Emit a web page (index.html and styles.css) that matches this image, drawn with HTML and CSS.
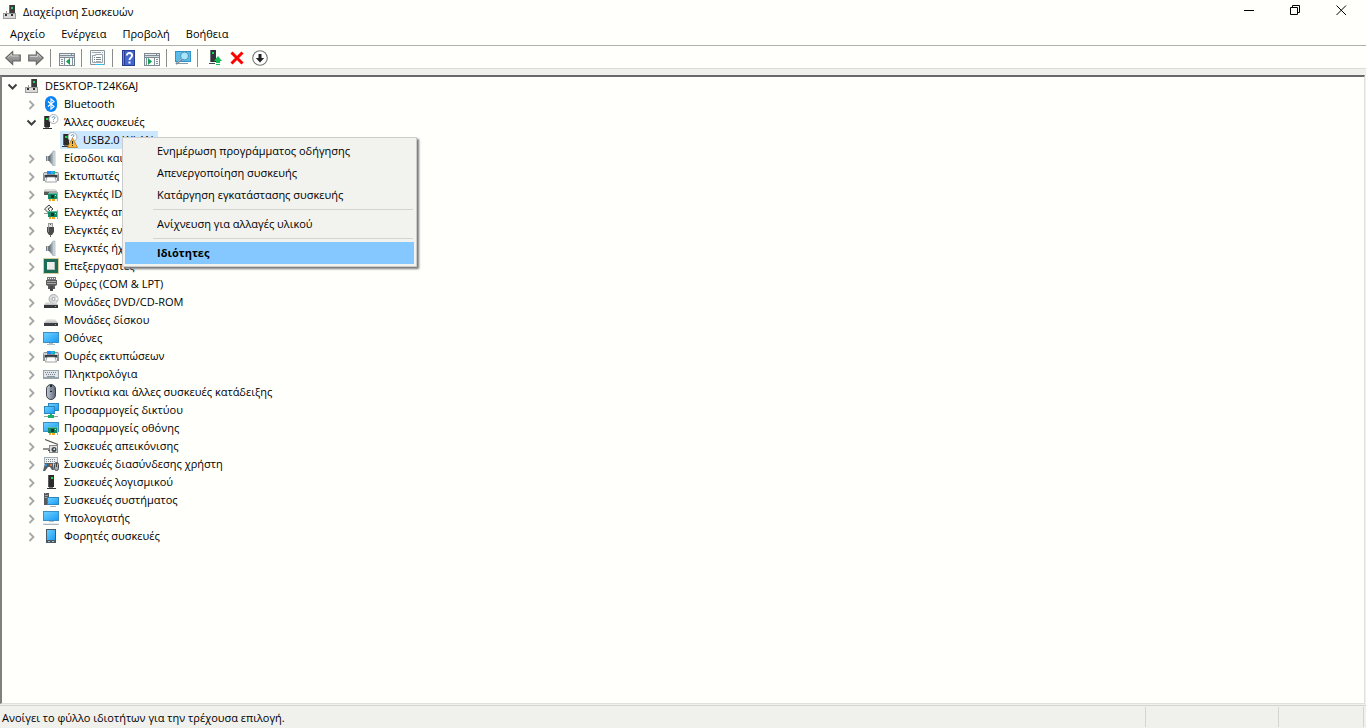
FILE: index.html
```
<!DOCTYPE html>
<html lang="el">
<head>
  <meta charset="UTF-8" />
  <meta name="viewport" content="width=device-width, initial-scale=1" />
  <title>Διαχείριση Συσκευών</title>
  <link rel="stylesheet" href="styles.css">
</head>
<body>
  <svg class="sprite" aria-hidden="true">
    <defs>
      <linearGradient id="gScreen" x1="0" y1="0" x2="1" y2="1">
        <stop offset="0" stop-color="#6dd0ff" />
        <stop offset="1" stop-color="#1a9cf5" />
      </linearGradient>
      <linearGradient id="gGrey" x1="0" y1="0" x2="0" y2="1">
        <stop offset="0" stop-color="#b4b4b4" />
        <stop offset="1" stop-color="#7c7c7c" />
      </linearGradient>
      <linearGradient id="gCone" x1="0" y1="0" x2="1" y2="0">
        <stop offset="0" stop-color="#59646c" />
        <stop offset="1" stop-color="#b8c3ca" />
      </linearGradient>
      <linearGradient id="gDrive" x1="0" y1="0" x2="0" y2="1">
        <stop offset="0" stop-color="#f0f0f0" />
        <stop offset="1" stop-color="#b9b9b9" />
      </linearGradient>
      <linearGradient id="gMouse" x1="0" y1="0" x2="1" y2="0">
        <stop offset="0" stop-color="#c3ccd8" />
        <stop offset="1" stop-color="#5d6775" />
      </linearGradient>
    </defs>
    <symbol id="closed" viewBox="0 0 16 16"><path d="M6.500 5l4 4-4 4" fill="none" stroke="#a6a6a6" stroke-width="1.800" /></symbol>
    <symbol id="open" viewBox="0 0 16 16"><path d="M4.500 6.500l4 4 4-4" fill="none" stroke="#404040" stroke-width="2" /></symbol>

    <symbol id="pc" viewBox="0 0 16 16">
      <path d="M7 1h6v8H7z" fill="#3b3b3b" /><path d="M7 1h1v8H7z" fill="#6d6d6d" />
      <path d="M9 3h2v2H9z" fill="#20d060" />
      <path d="M1 9h3V7h1v2h9v6H1z" fill="#9b9b9b" /><path d="M2 10h11v4H2z" fill="#dadada" />
      <path d="M3 10h2v2H3zM9 10h2v2H9z" fill="#303030" />
    </symbol>
    <symbol id="bluetooth" viewBox="0 0 16 16">
      <rect x="2" y="0" width="12" height="16" rx="6" fill="#0a84f5" />
      <path d="M5 5.500l6 5-3 2.500V3l3 2.500-6 5" fill="none" stroke="#fff" stroke-width="1.100" />
    </symbol>
    <symbol id="tower" viewBox="0 0 16 16">
      <path d="M1 2h6v11H1z" fill="#2c2c2c" /><path d="M1 2h1v11H1z" fill="#5b5b5b" />
      <path d="M3 4h2v2H3z" fill="#13e04b" /><path d="M0 14h9v1H0z" fill="#333" /><path d="M2 13h4v1H2z" fill="#777" />
    </symbol>
    <symbol id="unknown" viewBox="0 0 16 16">
      <use href="#tower" />
      <circle cx="10.500" cy="5" r="4.500" fill="#fff" stroke="#a9adb1" />
      <path d="M9.200 4c0-1.800 2.800-1.800 2.800-.300 0 1-1.500 1-1.500 2M10 7.300h1" fill="none" stroke="#4a8fc4" stroke-width="1" />
    </symbol>
    <symbol id="warning" viewBox="0 0 16 16">
      <use href="#unknown" />
      <path d="M10.500 6L15.500 15.500H5.500z" fill="#fbb836" stroke="#b97a16" stroke-width=".8" />
      <path d="M10 9h1v3h-1zM10 13h1v1h-1z" fill="#222" />
    </symbol>
    <symbol id="speaker" viewBox="0 0 16 16">
      <path d="M3 6h3v5H3z" fill="#707b83" /><path d="M6 6l4-5v15l-4-5z" fill="url(#gCone)" />
      <path d="M10 1h2v15h-2z" fill="#dce2e5" stroke="#9aa4ab" stroke-width=".6" /><path d="M4 6h1v5H4z" fill="#b9c2c8" />
    </symbol>
    <symbol id="printer" viewBox="0 0 16 16">
      <path d="M4 3h8v3H4z" fill="#1f8bef" /><path d="M8 3h2v3H8z" fill="#22b6f5" /><path d="M10 3h2v3h-2z" fill="#15b993" />
      <path d="M1 4h3v2h8V4h3l1 2v7h-2v-3H2v3H0V6z" fill="#8a9298" />
      <path d="M1 5h3v2H1zM12 5h3v2h-3z" fill="#cdd2d5" /><path d="M2 7h12v2H2z" fill="#33393e" />
      <path d="M4 9h8l1.500 5h-11z" fill="#fff" stroke="#777d82" stroke-width=".7" />
    </symbol>
    <symbol id="card" viewBox="0 0 16 16">
      <path d="M5 7h10v6H5z" fill="#148765" /><path d="M5 7h10v1H5z" fill="#5bb99b" />
      <path d="M8 9h3v3H8z" fill="#17342c" /><path d="M12 9h1v1h-1z" fill="#b8e9d4" />
      <path d="M6 13h2v2H6zM9 13h3v2H9z" fill="#f1a51e" /><path d="M14 6h1v9h-1z" fill="#a5aaad" />
    </symbol>
    <symbol id="ide" viewBox="0 0 16 16">
      <path d="M3 3h8l3 2v4H1V5z" fill="#a9a9a9" /><path d="M1 6h5v3H1z" fill="#5a5a5a" />
      <path d="M3 3h8l2 2H2z" fill="#ddd" /><use href="#card" />
    </symbol>
    <symbol id="storage" viewBox="0 0 16 16">
      <path d="M6 1L1.500 5 6 9.500 8 8 5 5l3-2zM8 3l2 2-2 1.500" fill="#e8e8e8" stroke="#444" />
      <path d="M1 9h4v1H1z" fill="#999" /><use href="#card" />
    </symbol>
    <symbol id="usb" viewBox="0 0 16 16">
      <path d="M5 1h5v4H5z" fill="#999" /><path d="M6 2h3v3H6z" fill="#e2e2e2" /><path d="M7 2h1v1H7z" fill="#555" />
      <path d="M4 5h7v5l-2 3H6l-2-3z" fill="#4a4a4a" /><path d="M5 5h1v5H5z" fill="#878787" /><path d="M7 13h1v2H7z" fill="#676767" />
    </symbol>
    <symbol id="cpu" viewBox="0 0 16 16">
      <path d="M.5.500h15v15H.500z" fill="none" stroke="#b59a45" stroke-dasharray="1 1" />
      <path d="M1 1h14v14H1z" fill="#1b6b57" /><path d="M4 4h8v8H4z" fill="#eceeed" /><path d="M4 11h8v1H4zM11 4h1v8h-1z" fill="#b4c2bc" />
    </symbol>
    <symbol id="port" viewBox="0 0 16 16">
      <path d="M4 1h9v3H4z" fill="#777" /><path d="M5 2h1v1H5zM7 2h1v1H7zM9 2h1v1H9zM11 2h1v1h-1z" fill="#eee" />
      <path d="M3 4h11v5l-2 1v3h-2v-2H7v2H5v-3L3 9z" fill="#5c5c5c" /><path d="M4 5h9v1H4zM4 7h9v1H4z" fill="#a4a4a4" /><path d="M7 10h3v5H7z" fill="#484848" />
    </symbol>
    <symbol id="drive" viewBox="0 0 16 16">
      <path d="M4 7h8l3 4H1z" fill="url(#gDrive)" /><path d="M1 11h14v3H1z" fill="#3b3f42" /><path d="M12 12h1v1h-1z" fill="#24e162" />
    </symbol>
    <symbol id="dvd" viewBox="0 0 16 16">
      <circle cx="10.500" cy="5" r="4.500" fill="#dadcde" stroke="#9da0a3" stroke-width=".8" /><path d="M10.500 5l4-2v3z" fill="#f9f9f9" />
      <circle cx="10.500" cy="5" r="1.500" fill="#fff" stroke="#858585" stroke-width=".7" />
      <path d="M3 8h3l3 2 4-2 2 3H1z" fill="url(#gDrive)" /><path d="M1 11h14v3H1z" fill="#34383b" /><path d="M12 12h1v1h-1z" fill="#24e162" />
    </symbol>
    <symbol id="monitor" viewBox="0 0 16 16">
      <path d="M0 2h16v11H0z" fill="#3a8fc4" /><path d="M1 3h14v9H1z" fill="url(#gScreen)" />
      <path d="M6 13h4v1H6zM4 14h8v1H4z" fill="#b2bdc5" />
    </symbol>
    <symbol id="keyboard" viewBox="0 0 16 16">
      <path d="M0 4h16v9H0z" fill="#98a3ab" /><path d="M1 5h14v6H1z" fill="#e1e6ea" />
      <path d="M2 6.500h12M3 8.500h10" stroke="#77838c" stroke-dasharray="1 1" /><path d="M4 10h8v1H4z" fill="#8c98a0" />
    </symbol>
    <symbol id="mouse" viewBox="0 0 16 16">
      <rect x="3.500" y=".5" width="9" height="15" rx="4.500" fill="url(#gMouse)" stroke="#3c434c" />
      <path d="M8 1v7" stroke="#22272c" stroke-width="2" /><path d="M8 3v4" stroke="#dde4ee" />
    </symbol>
    <symbol id="network" viewBox="0 0 16 16">
      <path d="M5 1h11v8H5z" fill="#2b86bf" /><path d="M6 2h9v6H6z" fill="url(#gScreen)" />
      <path d="M1 4h11v8H1z" fill="#2b86bf" /><path d="M2 5h9v6H2z" fill="url(#gScreen)" />
      <path d="M1 14h14v1H1z" fill="#92a59c" /><path d="M7 12h2v1H7zM5 13h6v3H5z" fill="#19ae68" />
    </symbol>
    <symbol id="display" viewBox="0 0 16 16">
      <path d="M0 2h16v10H0z" fill="#3a8fc4" /><path d="M1 3h14v8H1z" fill="url(#gScreen)" /><use href="#card" />
    </symbol>
    <symbol id="camera" viewBox="0 0 16 16">
      <path d="M2 1.500l13 5" stroke="#505050" stroke-width="1.300" /><path d="M0 10h7v2H0z" fill="#929292" />
      <path d="M6 7h9v8H6z" fill="#888" /><path d="M7 8h7v6H7z" fill="#ddd" /><circle cx="11" cy="11.500" r="2.500" fill="#404a4d" /><path d="M10.500 10.500h1.500v1.500h-1.500z" fill="#dff" /><path d="M5 12h2v1H5z" fill="#555" />
    </symbol>
    <symbol id="hid" viewBox="0 0 16 16">
      <path d="M1 1h14v7H1z" fill="#a5aeb5" /><path d="M2 2h12v5H2z" fill="#eef0f1" /><path d="M3 3.500h10M3 5.500h10" stroke="#7e888f" stroke-dasharray="1 1" />
      <path d="M2 7h8l1 7H9l-2-3H5l-3 4H0z" fill="#555f66" /><path d="M2 8h2v2H2z" fill="#2295ed" /><path d="M7 8h2v2H7z" fill="#e77a38" />
      <rect x="11.500" y="6.500" width="4" height="8" rx="2" fill="#a8b0b7" stroke="#444a4f" /><path d="M13 7h1v4h-1z" fill="#444" />
    </symbol>
    <symbol id="software" viewBox="0 0 16 16">
      <path d="M5 1h6v12H5z" fill="#2c2c2c" /><path d="M5 1h1v12H5z" fill="#5b5b5b" /><path d="M8 3h2v2H8z" fill="#13e04b" />
      <path d="M4 14h9v1H4z" fill="#333" /><path d="M6 13h4v1H6z" fill="#777" />
    </symbol>
    <symbol id="system" viewBox="0 0 16 16">
      <path d="M1 1h5v12H1z" fill="#565b5f" /><path d="M2 3h3v1H2zM2 5h3v1H2z" fill="#a1a7aa" /><path d="M2 1h1v1H2z" fill="#22d353" />
      <path d="M4 5h12v8H4z" fill="#2b86bf" /><path d="M5 6h10v6H5z" fill="url(#gScreen)" /><path d="M7 14h6v1H7z" fill="#a7b2ba" />
    </symbol>
    <symbol id="computer" viewBox="0 0 16 16">
      <path d="M0 1h16v10H0z" fill="#3a8fc4" /><path d="M1 2h14v8H1z" fill="url(#gScreen)" />
      <path d="M6 11h5v1H6z" fill="#bbc4c9" /><path d="M1 13h14l1 2H0z" fill="#a9b6bf" /><path d="M1 13h14v1H1z" fill="#e3e9ec" />
    </symbol>
    <symbol id="portable" viewBox="0 0 16 16">
      <path d="M3 1h10v14H3z" fill="#4a5862" /><path d="M4 2h8v10H4z" fill="url(#gScreen)" /><path d="M5 13h2v1H5zM9 13h2v1H9z" fill="#aebac2" />
    </symbol>

    <symbol id="back" viewBox="0 0 16 16">
      <path d="M.7 8l7-6.500V5h7.600v6H7.700v3.500z" fill="url(#gGrey)" stroke="#666" stroke-width="1.100" /><path d="M3 7.500L6.500 4v2h7" fill="none" stroke="#ccc" />
    </symbol>
    <symbol id="forward" viewBox="0 0 16 16">
      <path d="M15.300 8l-7-6.500V5H.7v6h7.600v3.500z" fill="url(#gGrey)" stroke="#666" stroke-width="1.100" /><path d="M2 6.500h7.500V4L13 7.500" fill="none" stroke="#ccc" />
    </symbol>
    <symbol id="panel" viewBox="0 0 16 16">
      <path d="M0 3h16v13H0z" fill="#7e8a93" /><path d="M1 4h11v1H1zM13 4h2v1h-2z" fill="#e7ebee" />
      <path d="M1 6h14v1H1z" fill="#d5dce0" /><path d="M1 8h14v7H1z" fill="#fafafa" />
    </symbol>
    <symbol id="showtree" viewBox="0 0 16 16">
      <use href="#panel" /><path d="M5 8h1v8H5zM2 9h2v1H2zM2 11h2v1H2zM2 13h2v1H2zM13 8h1v8h-1z" fill="#82919b" /><path d="M11 8v7l-4-3.500z" fill="#13a052" />
    </symbol>
    <symbol id="showaction" viewBox="0 0 16 16">
      <use href="#panel" /><path d="M10 8h1v8h-1zM12 9h2v1h-2zM12 11h2v1h-2zM12 13h2v1h-2zM2 8h1v8H2z" fill="#82919b" /><path d="M4 8v7l4-3.500z" fill="#13a052" />
    </symbol>
    <symbol id="props" viewBox="0 0 16 16">
      <path d="M.5.5h14v14H.5z" fill="#f8f8f8" stroke="#89939a" /><path d="M2 2h9v1H2zM12 2h1v1h-1z" fill="#9ca8b0" />
      <path d="M2.500 5.500h3v-1h7v8h-10z" fill="#fff" stroke="#9ba5ac" /><path d="M4 7h1v1H4zM6 7h5v1H6zM4 9h1v1H4zM6 9h5v1H6z" fill="#798790" /><path d="M4 11h1v1H4zM6 11h5v1H6z" fill="#aaa" /><path d="M6 14h3v1H6zM10 14h3v1h-3z" fill="#31c8f0" />
    </symbol>
    <symbol id="help" viewBox="0 0 16 16">
      <path d="M1 0h13v16H1z" fill="#273e92" /><path d="M4 1h9v14H4z" fill="#4467ce" /><path d="M2 1h1v14H2z" fill="#7187ca" />
      <path d="M5.800 5.500c0-3.400 5.300-3.100 5.300 0C11.100 7.500 8.500 7.800 8.500 10M7.500 12.500h2" fill="none" stroke="#fff" stroke-width="1.900" />
    </symbol>
    <symbol id="scan" viewBox="0 0 16 16">
      <path d="M0 1h16v11H0z" fill="#2f93cd" /><path d="M1 2h14v9H1z" fill="#59bdeb" /><path d="M3 13h10v1H3z" fill="#8899a3" />
      <circle cx="9.500" cy="6" r="4" fill="#a8e5ff" stroke="#5391ae" /><path d="M7 9l-6 5" stroke="#6b838f" stroke-width="2" /><path d="M7 8.500l-5 4.500" stroke="#ddd" stroke-width=".7" />
    </symbol>
    <symbol id="update" viewBox="0 0 16 16">
      <path d="M4 0h6v12H4z" fill="#303438" /><path d="M4 0h1v12H4z" fill="#73787c" /><path d="M6 2h2v2H6z" fill="#12e048" /><path d="M3 13h6v1H3z" fill="#454a4e" />
      <path d="M12 6l4 5h-2v2h-4v-2H8z" fill="#18bc54" /><path d="M10 14h4v1h-4z" fill="#18bc54" />
    </symbol>
    <symbol id="remove" viewBox="0 0 16 16"><path d="M2.500 2.500l11 11M13.500 2.500l-11 11" fill="none" stroke="#f00" stroke-width="3" /></symbol>
    <symbol id="disable" viewBox="0 0 16 16"><circle cx="8" cy="8" r="7.300" fill="#fff" stroke="#777" stroke-width="1.100" /><path d="M6.500 4h3v4h2.700L8 12.500 3.800 8h2.700z" fill="#222" /></symbol>
  </svg>

  <div class="window">
    <header class="titlebar">
      <svg class="icon"><use href="#pc" /></svg>
      <h1>Διαχείριση Συσκευών</h1>
      <div class="controls">
        <button aria-label="Ελαχιστοποίηση"><svg viewBox="0 0 11 11"><path d="M0 5h10v1H0z" /></svg></button>
        <button aria-label="Επαναφορά"><svg viewBox="0 0 11 11"><path d="M.5 2.500h7v7h-7zM2.500 2.500v-2h7v7h-2" fill="none" stroke="#000" /></svg></button>
        <button aria-label="Κλείσιμο"><svg viewBox="0 0 11 11"><path d="M.5.500l9.500 9.500M10 .500L.5 10" fill="none" stroke="#000" /></svg></button>
      </div>
    </header>

    <nav class="menubar">
      <button>Αρχείο</button>
      <button>Ενέργεια</button>
      <button>Προβολή</button>
      <button>Βοήθεια</button>
    </nav>

    <div class="toolbar">
      <button aria-label="Πίσω"><svg class="icon"><use href="#back" /></svg></button>
      <button aria-label="Εμπρός"><svg class="icon"><use href="#forward" /></svg></button>
      <span class="sep"></span>
      <button aria-label="Δέντρο κονσόλας"><svg class="icon"><use href="#showtree" /></svg></button>
      <span class="sep"></span>
      <button aria-label="Ιδιότητες"><svg class="icon"><use href="#props" /></svg></button>
      <span class="sep"></span>
      <button aria-label="Βοήθεια"><svg class="icon"><use href="#help" /></svg></button>
      <button aria-label="Παράθυρο ενεργειών"><svg class="icon"><use href="#showaction" /></svg></button>
      <span class="sep"></span>
      <button aria-label="Ανίχνευση για αλλαγές υλικού"><svg class="icon"><use href="#scan" /></svg></button>
      <span class="sep"></span>
      <button aria-label="Ενημέρωση προγράμματος οδήγησης"><svg class="icon"><use href="#update" /></svg></button>
      <button aria-label="Κατάργηση εγκατάστασης συσκευής"><svg class="icon"><use href="#remove" /></svg></button>
      <button aria-label="Απενεργοποίηση συσκευής"><svg class="icon"><use href="#disable" /></svg></button>
    </div>

    <main class="pane">
      <ul class="tree">
        <li>
          <div class="row"><button class="toggle" aria-label="Σύμπτυξη"><svg class="icon"><use href="#open" /></svg></button><span class="node"><svg class="icon"><use href="#pc" /></svg>DESKTOP-T24K6AJ</span></div>
          <ul>
            <li class="row"><button class="toggle" aria-label="Ανάπτυξη"><svg class="icon"><use href="#closed" /></svg></button><span class="node"><svg class="icon"><use href="#bluetooth" /></svg>Bluetooth</span></li>
            <li>
              <div class="row"><button class="toggle" aria-label="Σύμπτυξη"><svg class="icon"><use href="#open" /></svg></button><span class="node"><svg class="icon"><use href="#unknown" /></svg>Άλλες συσκευές</span></div>
              <ul>
                <li class="row leaf"><span class="node selected"><svg class="icon"><use href="#warning" /></svg>USB2.0 WLAN</span></li>
              </ul>
            </li>
            <li class="row"><button class="toggle" aria-label="Ανάπτυξη"><svg class="icon"><use href="#closed" /></svg></button><span class="node"><svg class="icon"><use href="#speaker" /></svg>Είσοδοι και</span></li>
            <li class="row"><button class="toggle" aria-label="Ανάπτυξη"><svg class="icon"><use href="#closed" /></svg></button><span class="node"><svg class="icon"><use href="#printer" /></svg>Εκτυπωτές</span></li>
            <li class="row"><button class="toggle" aria-label="Ανάπτυξη"><svg class="icon"><use href="#closed" /></svg></button><span class="node"><svg class="icon"><use href="#ide" /></svg>Ελεγκτές IDE</span></li>
            <li class="row"><button class="toggle" aria-label="Ανάπτυξη"><svg class="icon"><use href="#closed" /></svg></button><span class="node"><svg class="icon"><use href="#storage" /></svg>Ελεγκτές απ</span></li>
            <li class="row"><button class="toggle" aria-label="Ανάπτυξη"><svg class="icon"><use href="#closed" /></svg></button><span class="node"><svg class="icon"><use href="#usb" /></svg>Ελεγκτές εν</span></li>
            <li class="row"><button class="toggle" aria-label="Ανάπτυξη"><svg class="icon"><use href="#closed" /></svg></button><span class="node"><svg class="icon"><use href="#speaker" /></svg>Ελεγκτές ήχ</span></li>
            <li class="row"><button class="toggle" aria-label="Ανάπτυξη"><svg class="icon"><use href="#closed" /></svg></button><span class="node"><svg class="icon"><use href="#cpu" /></svg>Επεξεργαστές</span></li>
            <li class="row"><button class="toggle" aria-label="Ανάπτυξη"><svg class="icon"><use href="#closed" /></svg></button><span class="node"><svg class="icon"><use href="#port" /></svg>Θύρες (COM &amp; LPT)</span></li>
            <li class="row"><button class="toggle" aria-label="Ανάπτυξη"><svg class="icon"><use href="#closed" /></svg></button><span class="node"><svg class="icon"><use href="#dvd" /></svg>Μονάδες DVD/CD-ROM</span></li>
            <li class="row"><button class="toggle" aria-label="Ανάπτυξη"><svg class="icon"><use href="#closed" /></svg></button><span class="node"><svg class="icon"><use href="#drive" /></svg>Μονάδες δίσκου</span></li>
            <li class="row"><button class="toggle" aria-label="Ανάπτυξη"><svg class="icon"><use href="#closed" /></svg></button><span class="node"><svg class="icon"><use href="#monitor" /></svg>Οθόνες</span></li>
            <li class="row"><button class="toggle" aria-label="Ανάπτυξη"><svg class="icon"><use href="#closed" /></svg></button><span class="node"><svg class="icon"><use href="#printer" /></svg>Ουρές εκτυπώσεων</span></li>
            <li class="row"><button class="toggle" aria-label="Ανάπτυξη"><svg class="icon"><use href="#closed" /></svg></button><span class="node"><svg class="icon"><use href="#keyboard" /></svg>Πληκτρολόγια</span></li>
            <li class="row"><button class="toggle" aria-label="Ανάπτυξη"><svg class="icon"><use href="#closed" /></svg></button><span class="node"><svg class="icon"><use href="#mouse" /></svg>Ποντίκια και άλλες συσκευές κατάδειξης</span></li>
            <li class="row"><button class="toggle" aria-label="Ανάπτυξη"><svg class="icon"><use href="#closed" /></svg></button><span class="node"><svg class="icon"><use href="#network" /></svg>Προσαρμογείς δικτύου</span></li>
            <li class="row"><button class="toggle" aria-label="Ανάπτυξη"><svg class="icon"><use href="#closed" /></svg></button><span class="node"><svg class="icon"><use href="#display" /></svg>Προσαρμογείς οθόνης</span></li>
            <li class="row"><button class="toggle" aria-label="Ανάπτυξη"><svg class="icon"><use href="#closed" /></svg></button><span class="node"><svg class="icon"><use href="#camera" /></svg>Συσκευές απεικόνισης</span></li>
            <li class="row"><button class="toggle" aria-label="Ανάπτυξη"><svg class="icon"><use href="#closed" /></svg></button><span class="node"><svg class="icon"><use href="#hid" /></svg>Συσκευές διασύνδεσης χρήστη</span></li>
            <li class="row"><button class="toggle" aria-label="Ανάπτυξη"><svg class="icon"><use href="#closed" /></svg></button><span class="node"><svg class="icon"><use href="#software" /></svg>Συσκευές λογισμικού</span></li>
            <li class="row"><button class="toggle" aria-label="Ανάπτυξη"><svg class="icon"><use href="#closed" /></svg></button><span class="node"><svg class="icon"><use href="#system" /></svg>Συσκευές συστήματος</span></li>
            <li class="row"><button class="toggle" aria-label="Ανάπτυξη"><svg class="icon"><use href="#closed" /></svg></button><span class="node"><svg class="icon"><use href="#computer" /></svg>Υπολογιστής</span></li>
            <li class="row"><button class="toggle" aria-label="Ανάπτυξη"><svg class="icon"><use href="#closed" /></svg></button><span class="node"><svg class="icon"><use href="#portable" /></svg>Φορητές συσκευές</span></li>
          </ul>
        </li>
      </ul>

      <div class="context-menu">
        <button>Ενημέρωση προγράμματος οδήγησης</button>
        <button>Απενεργοποίηση συσκευής</button>
        <button>Κατάργηση εγκατάστασης συσκευής</button>
        <hr>
        <button>Ανίχνευση για αλλαγές υλικού</button>
        <hr>
        <button class="active">Ιδιότητες</button>
      </div>
    </main>

    <footer class="statusbar">
      <span class="message">Ανοίγει το φύλλο ιδιοτήτων για την τρέχουσα επιλογή.</span>
      <span class="part wide"></span>
      <span class="part"></span>
    </footer>
  </div>
</body>
</html>
```

FILE: styles.css
```
* {
  box-sizing: border-box;
}

body {
  margin: 0;
  font-family: "Open Sans", "Noto Sans", sans-serif;
  font-size: 11px;
  line-height: 18px;
  color: #000;
  background: #fffffb;
}

button {
  font: inherit;
  color: inherit;
  padding: 0;
  border: none;
  background: none;
}

ul {
  list-style: none;
  margin: 0;
  padding: 0;
}

.sprite {
  position: absolute;
  width: 0;
  height: 0;
}

.icon {
  display: block;
  flex: none;
  width: 16px;
  height: 16px;
}

.window {
  display: flex;
  flex-direction: column;
  min-height: 100vh;
  background: #f0f0ec;
}

/* title bar */
.titlebar {
  display: flex;
  align-items: center;
  height: 24px;
  padding: 0 2px;
  background: #fffffb;
}

.titlebar h1 {
  flex: 1;
  margin: 0 0 0 5px;
  font-size: 11px;
  font-weight: normal;
}

.controls {
  display: flex;
  align-self: flex-start;
}

.controls button {
  display: flex;
  align-items: center;
  justify-content: center;
  width: 46px;
  height: 21px;
}

.controls svg {
  width: 11px;
  height: 11px;
}

.menubar {
  display: flex;
  height: 21px;
  padding: 0 2px 2px;
  background: #fffffb;
}

.menubar button {
  padding: 0 8px;
}

/* toolbar */
.toolbar {
  display: flex;
  align-items: center;
  height: 24px;
  padding: 2px 2px 0;
  background: #fffffb;
  border-top: 1px solid #b0b0b0;
  border-bottom: 1px solid #dcdcd8;
}

.toolbar button {
  padding: 0 4px 0 3px;
}

.toolbar .sep {
  width: 1px;
  height: 18px;
  margin: 0 5px 0 2px;
  background: #8c8c8c;
}

/* device tree */
.pane {
  flex: 1;
  position: relative;
  margin: 6px 1px 1px 0;
  background: #fffffb;
  border-style: solid;
  border-width: 2px 1px 1px 2px;
  border-color: #696969 #e0e0dc #e0e0dc #808080;
}

.tree {
  padding-left: 2px;
}

.tree ul {
  padding-left: 19px;
}

.row {
  display: flex;
  align-items: center;
  gap: 2px;
  height: 18px;
}

.leaf {
  padding-left: 18px;
}

.node {
  display: flex;
  align-items: center;
  gap: 5px;
  padding: 0 4px 0 2px;
  white-space: nowrap;
}

.selected {
  background: #cce8ff;
}

/* context menu */
.context-menu {
  position: absolute;
  left: 120px;
  top: 60px;
  width: 295px;
  padding: 2px;
  background: #f2f2ee;
  border: 1px solid #ccc;
  box-shadow: 2px 2px 2px #777;
}

.context-menu button {
  display: block;
  width: 100%;
  height: 22px;
  padding-left: 32px;
  text-align: left;
}

.context-menu hr {
  height: 1px;
  margin: 3px 1px 3px 28px;
  border: none;
  background: #d4d4d0;
}

.context-menu .active {
  font-weight: bold;
  background: #84c8ff;
}

/* status bar */
.statusbar {
  display: flex;
  height: 23px;
  padding: 1px 2px;
  border-top: 1px solid #d4d4d0;
}

.message {
  flex: 1;
  line-height: 22px;
}

.part {
  width: 86px;
  border-left: 1px solid #d4d4d0;
}

.part.wide {
  width: 133px;
}

.part:last-child {
  border-right: 1px solid #d4d4d0;
}
```
